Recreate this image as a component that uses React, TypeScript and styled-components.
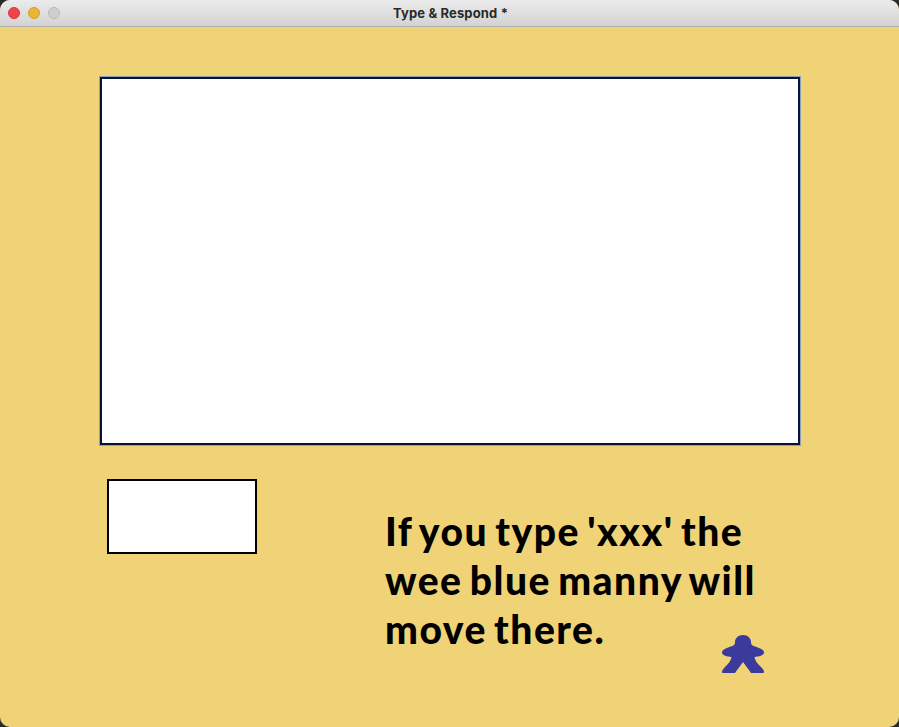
import React from 'react';
import styled, { createGlobalStyle } from 'styled-components';

const GlobalStyle = createGlobalStyle`
  html, body {
    margin: 0;
    padding: 0;
    background: #2b2b2b;
  }
`;

const Window = styled.div`
  width: 899px;
  height: 727px;
  display: flex;
  flex-direction: column;
  border-radius: 10px;
  overflow: hidden;
  background: #f0d377;
`;

const TitleBar = styled.div`
  position: relative;
  height: 26px;
  flex: none;
  display: flex;
  align-items: center;
  justify-content: center;
  padding-left: 2px;
  background: linear-gradient(#ebebeb, #d3d3d3);
  border-bottom: 1px solid #b0b0b0;
`;

const Lights = styled.div`
  position: absolute;
  left: 8px;
  top: 7px;
  display: flex;
  gap: 8px;
`;

const Light = styled.span<{ $fill: string; $edge: string }>`
  width: 12px;
  height: 12px;
  box-sizing: border-box;
  border-radius: 50%;
  background: ${props => props.$fill};
  border: 1px solid ${props => props.$edge};
`;

const Title = styled.div`
  font-family: "Inter", "Liberation Sans", sans-serif;
  font-size: 13px;
  font-weight: 700;
  letter-spacing: 0.15px;
  color: #2a2a2a;
`;

const Content = styled.div`
  flex: 1;
  display: flex;
  flex-direction: column;
  padding: 50px 99px 0 100px;
`;

const Display = styled.div`
  box-sizing: border-box;
  width: 700px;
  height: 368px;
  background: #fff;
  border: 2px solid #0b1238;
  box-shadow: 0 0 0 1px #8aa2b6;
`;

const LowerRow = styled.div`
  display: flex;
  margin-top: 34px;
  padding-left: 7px;
`;

const Entry = styled.div`
  box-sizing: border-box;
  width: 150px;
  height: 75px;
  background: #fff;
  border: 2px solid #000;
`;

const Message = styled.div`
  width: 390px;
  margin: 28px 0 0 128px;
  font-family: "Lato", "Noto Sans", sans-serif;
  font-size: 39px;
  font-weight: 900;
  letter-spacing: 1.5px;
  word-spacing: -3.5px;
  line-height: 49px;
  color: #000;
`;

const MeepleIcon = styled.svg`
  position: absolute;
  left: 722px;
  top: 635px;
  width: 42px;
  height: 38px;
`;

const Meeple = () => (
  <MeepleIcon viewBox="0 0 42 38">
    <path
      d="M21 0 C26 0 29 3.5 29 7 C29 9 29.5 10 31 10.7 C34 12 42 13.5 42 17.5 C42 20.5 37 21.5 32.5 22 C33 26 36 29 39 32 C41 34 42 35.5 42 37 C42 37.7 41.5 38 41 38 L30 38 C29 38 28.5 37.5 28 36.5 L21 27 L14 36.5 C13.5 37.5 13 38 12 38 L1 38 C0.5 38 0 37.7 0 37 C0 35.5 1 34 3 32 C6 29 9 26 9.5 22 C5 21.5 0 20.5 0 17.5 C0 13.5 8 12 11 10.7 C12.5 10 13 9 13 7 C13 3.5 16 0 21 0 Z"
      fill="#3c3a9c"
    />
  </MeepleIcon>
);

const App: React.FC = () => {
  return (
    <>
      <GlobalStyle />
      <Window>
        <TitleBar>
          <Lights>
            <Light $fill="#f1444a" $edge="#d9393f" />
            <Light $fill="#ecb431" $edge="#d29f2a" />
            <Light $fill="#cfcfcf" $edge="#b9b9b9" />
          </Lights>
          <Title>Type &amp; Respond *</Title>
        </TitleBar>
        <Content>
          <Display />
          <LowerRow>
            <Entry />
            <Message>If you type 'xxx' the wee blue manny will move there.</Message>
          </LowerRow>
        </Content>
        <Meeple />
      </Window>
    </>
  );
};

export default App;
